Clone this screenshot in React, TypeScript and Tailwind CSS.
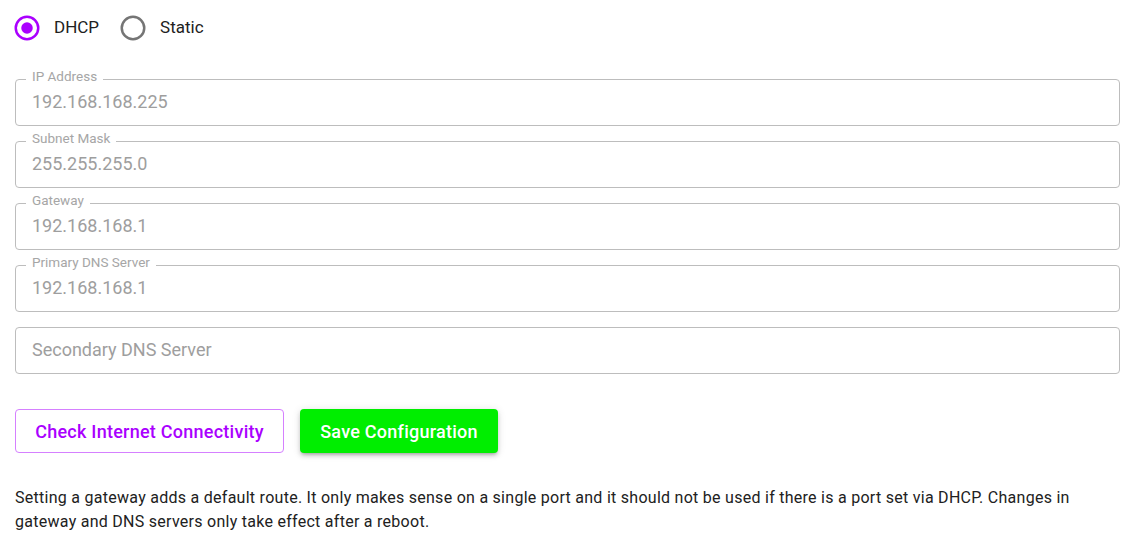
import React, { useState } from 'react';

// ── Types ─────────────────────────────────────────────────────────────

type Mode = 'dhcp' | 'static';

interface FieldProps {
  label?: string;
  value: string;
}

// ── Pieces ────────────────────────────────────────────────────────────

const RadioIcon: React.FC<{ checked: boolean }> = ({ checked }) => (
  <svg width="30" height="30" viewBox="0 0 24 24" className="shrink-0">
    <circle
      cx="12"
      cy="12"
      r="9"
      fill="none"
      stroke={checked ? '#aa00ff' : '#757575'}
      strokeWidth="2"
    />
    {checked && <circle cx="12" cy="12" r="4.6" fill="#aa00ff" />}
  </svg>
);

const Field: React.FC<FieldProps> = ({ label, value }) => {
  if (!label) {
    return (
      <div className="mt-[6px] flex h-[47px] items-center rounded-[4px] border border-[#bdbdbd] px-4 pb-[2px]">
        <span className="text-[18px] text-[#9e9e9e]">{value}</span>
      </div>
    );
  }
  return (
    <fieldset className="m-0 h-[53px] rounded-[4px] border border-[#bdbdbd] px-[10px] pb-0">
      <legend className="px-[6px] text-[13.5px] leading-[12px] text-[#a6a6a6]">
        <span className="relative -top-[3px]">{label}</span>
      </legend>
      <div className="flex h-[39px] items-center pb-[7px] pl-[6px] text-[18px] text-[#9e9e9e]">
        {value}
      </div>
    </fieldset>
  );
};

// ── App ───────────────────────────────────────────────────────────────

export default function App() {
  const [mode, setMode] = useState<Mode>('dhcp');

  return (
    <div
      className="min-h-[535px] w-[1122px] bg-white pl-[15px] pr-[2px] text-[#212121]"
      style={{ fontFamily: 'Roboto, "Noto Sans", sans-serif' }}
    >
      {/* Address mode */}
      <div className="flex h-[55px] items-center pt-[1px]">
        <label
          className="-ml-[3px] flex cursor-pointer items-center gap-[12px]"
          onClick={() => setMode('dhcp')}
        >
          <RadioIcon checked={mode === 'dhcp'} />
          <span className="text-[17px]">DHCP</span>
        </label>
        <label
          className="ml-[19px] flex cursor-pointer items-center gap-[12px]"
          onClick={() => setMode('static')}
        >
          <RadioIcon checked={mode === 'static'} />
          <span className="text-[17px]">Static</span>
        </label>
      </div>

      {/* Network fields */}
      <div className="mt-[18px] flex flex-col gap-[9px]">
        <Field label="IP Address" value="192.168.168.225" />
        <Field label="Subnet Mask" value="255.255.255.0" />
        <Field label="Gateway" value="192.168.168.1" />
        <Field label="Primary DNS Server" value="192.168.168.1" />
        <Field value="Secondary DNS Server" />
      </div>

      {/* Actions */}
      <div className="mt-[35px] flex gap-4">
        <button className="h-[44px] w-[269px] rounded-[4px] border border-[#d580ff] bg-white text-[18px] font-medium tracking-[0.25px] text-[#aa00ff]">
          Check Internet Connectivity
        </button>
        <button className="h-[44px] w-[198px] rounded-[4px] bg-[#00ee00] text-[18px] font-medium tracking-[0.25px] text-white shadow-[0_3px_3px_-2px_rgba(0,0,0,0.2),0_3px_4px_0_rgba(0,0,0,0.14),0_1px_8px_0_rgba(0,0,0,0.12)]">
          Save Configuration
        </button>
      </div>

      <p className="mt-[33px] text-[16px] leading-[24px] tracking-[0.27px] text-[#212121]">
        Setting a gateway adds a default route. It only makes sense on a single port and it should
        not be used if there is a port set via DHCP. Changes in gateway and DNS servers only take
        effect after a reboot.
      </p>
    </div>
  );
}
